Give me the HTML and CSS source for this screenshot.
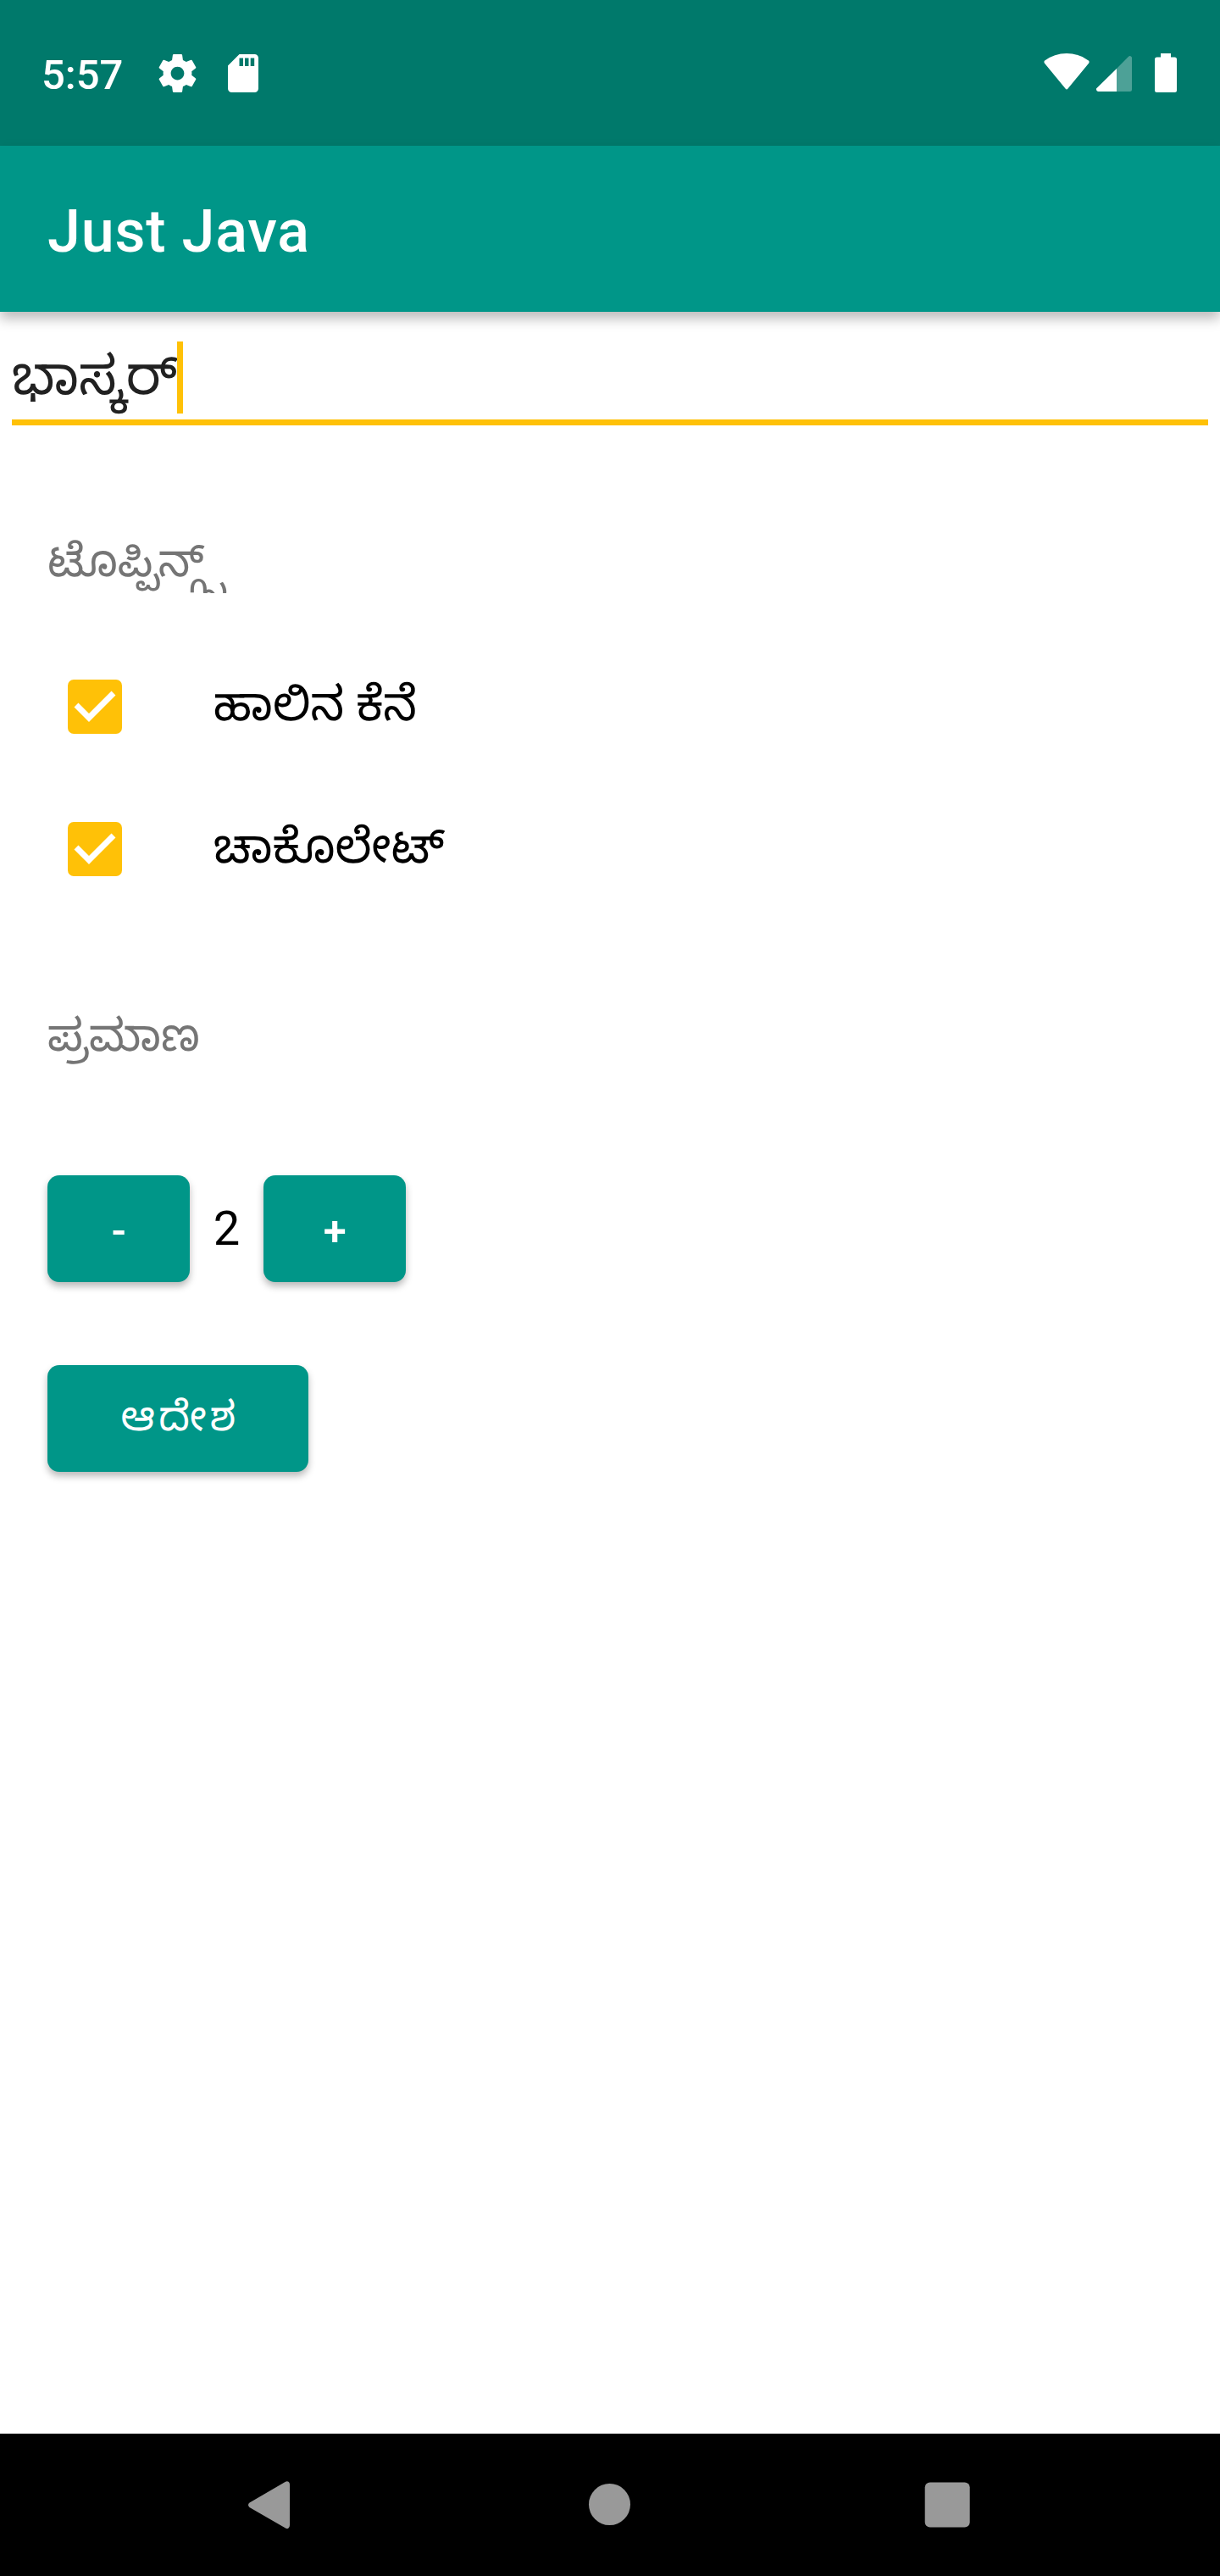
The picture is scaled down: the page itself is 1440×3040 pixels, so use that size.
FILE: index.html
```html
<!DOCTYPE html>
<html lang="kn">
<head>
<meta charset="utf-8">
<title>Just Java</title>
<link rel="stylesheet" href="styles.css">
</head>
<body>
<div class="screen">
  <header class="status-bar">
    <span class="clock">5:57</span>
    <svg class="gear" viewBox="2 2 20 20"><path d="M19.43 12.98c.04-.32.07-.64.07-.98s-.03-.66-.07-.98l2.11-1.65c.19-.15.24-.42.12-.64l-2-3.46c-.12-.22-.39-.3-.61-.22l-2.49 1c-.52-.4-1.08-.73-1.69-.98l-.38-2.65C14.46 2.18 14.25 2 14 2h-4c-.25 0-.46.18-.49.42l-.38 2.65c-.61.25-1.17.59-1.69.98l-2.49-1c-.23-.09-.49 0-.61.22l-2 3.46c-.13.22-.07.49.12.64l2.11 1.65c-.04.32-.07.65-.07.98s.03.66.07.98l-2.11 1.65c-.19.15-.24.42-.12.64l2 3.46c.12.22.39.3.61.22l2.49-1c.52.4 1.08.73 1.69.98l.38 2.65c.03.24.24.42.49.42h4c.25 0 .46-.18.49-.42l.38-2.65c.61-.25 1.17-.59 1.69-.98l2.49 1c.23.09.49 0 .61-.22l2-3.46c.12-.22.07-.49-.12-.64l-2.11-1.65zM12 15.5c-1.93 0-3.5-1.57-3.5-3.5s1.57-3.5 3.5-3.5 3.5 1.57 3.5 3.5-1.57 3.5-3.5 3.5z"/></svg>
    <svg class="sd-card" viewBox="0 0 36 45"><path fill-rule="evenodd" d="M13.5 0H31.5a4.5 4.5 0 0 1 4.5 4.5V40.500a4.500 4.500 0 0 1-4.500 4.500H4.500A4.500 4.500 0 0 1 0 40.500V13.500ZM13.500 4.500V14H18V4.500ZM20 4.500V14H24.500V4.500ZM26.700 4.500V14H31.200V4.500Z"/></svg>
    <span class="spacer"></span>
    <svg class="wifi" viewBox="0 0 54 43"><path d="M.8 8.700Q12.500 0 27 0T53.200 8.700Q54 10 53.200 11.500L28.500 41.500Q27 43.500 25.500 41.500L.8 11.500Q0 10 .8 8.700Z"/></svg>
    <svg class="signal" viewBox="0 0 42 42"><path opacity=".3" d="M24 15 37.800 1Q39.500-.5 41 .5T42 3V39.500Q42 42 39.500 42H24Z"/><path d="M24 15V42H2.500Q.5 42 0 40T1 37.500Z"/></svg>
    <svg class="battery" viewBox="0 0 26 46"><path d="M7 0H19V4.500H23.500Q26 4.500 26 7V43.500Q26 46 23.500 46H2.500Q0 46 0 43.500V7Q0 4.500 2.500 4.500H7Z"/></svg>
  </header>
  <div class="app-bar"><h1 class="app-title">Just Java</h1></div>
  <main class="form">
    <div class="name-field"><span class="name-value">ಭಾಸ್ಕರ್</span><span class="caret"></span></div>
    <h2 class="section-label toppings">ಟೊಪ್ಪಿನ್ಗ್ಸ್</h2>
    <div class="option">
      <svg class="checkbox" viewBox="0 0 64 64"><rect width="64" height="64" rx="7"/><path d="M10 30 25 45 54 16"/></svg>
      <span>ಹಾಲಿನ ಕೆನೆ</span>
    </div>
    <div class="option">
      <svg class="checkbox" viewBox="0 0 64 64"><rect width="64" height="64" rx="7"/><path d="M10 30 25 45 54 16"/></svg>
      <span>ಚಾಕೊಲೇಟ್</span>
    </div>
    <h2 class="section-label quantity-label">ಪ್ರಮಾಣ</h2>
    <div class="stepper">
      <button class="button step">-</button>
      <span class="quantity">2</span>
      <button class="button step">+</button>
    </div>
    <button class="button order">ಆದೇಶ</button>
  </main>
  <nav class="nav-bar">
    <svg class="nav-icon" viewBox="0 0 56 56"><path d="M2.500 25.600 45 .8Q47-.3 48.500 .8T50 4V52Q50 54.500 48.500 55.500T45 55.500L2.500 31Q-.5 28.300 2.500 25.600Z"/></svg>
    <svg class="nav-icon" viewBox="0 0 56 56"><circle cx="28.500" cy="27.500" r="24.500"/></svg>
    <svg class="nav-icon" viewBox="0 0 56 56"><rect x="1.700" y="1.500" width="53" height="53" rx="6"/></svg>
  </nav>
</div>
</body>
</html>
```
FILE: styles.css
```css
* { box-sizing: border-box; }

body {
  margin: 0;
  background: #fff;
  color: #000;
  font-family: Roboto, "Noto Sans Kannada", "Noto Sans", sans-serif;
}

svg { display: block; flex: none; overflow: visible; }

.screen {
  display: flex;
  flex-direction: column;
  width: 1440px;
  height: 3040px;
  overflow: hidden;
}

.status-bar {
  display: flex;
  align-items: flex-start;
  flex: none;
  height: 172px;
  padding: 63px 51px 0 49px;
  background: #00796b;
  fill: #fff;
}

.clock {
  width: 138px;
  margin-top: -3px;
  color: #fff;
  font-size: 49px;
  font-weight: 500;
  line-height: 57px;
}

.gear { width: 45px; height: 45px; margin-top: 1px; }
.sd-card { width: 36px; height: 45px; margin: 1px 0 0 37px; }
.spacer { flex: 1; }
.wifi { width: 54px; height: 43px; }
.signal { width: 42px; height: 42px; margin: 3px 27px 0 8px; }
.battery { width: 26px; height: 46px; }

.app-bar {
  display: flex;
  align-items: center;
  position: relative;
  flex: none;
  height: 196px;
  padding-left: 56px;
  background: #009688;
  box-shadow: 0 8px 14px rgba(0, 0, 0, .27);
}

.app-title {
  margin: 6px 0 0;
  color: #fff;
  font-size: 70px;
  font-weight: 500;
  letter-spacing: .8px;
  line-height: 82px;
}

.form {
  display: flex;
  flex: 1;
  flex-direction: column;
  align-items: flex-start;
}

.name-field {
  display: flex;
  align-self: stretch;
  height: 99px;
  margin: 35px 14px 0;
  border-bottom: 7px solid #ffc107;
  color: #212121;
  font-size: 63px;
  line-height: 81px;
}

.name-value { width: 195px; white-space: nowrap; }
.caret { width: 7px; height: 85px; background: #ffc107; }

.section-label {
  height: 75px;
  margin: 0 0 0 56px;
  color: #757575;
  font-size: 53px;
  font-weight: 400;
  line-height: 75px;
  white-space: nowrap;
}

.toppings {
  width: 216px;
  margin-top: 123px;
  margin-bottom: 50px;
  overflow: hidden;
}

.option {
  display: flex;
  align-items: center;
  gap: 108px;
  height: 168px;
  padding-left: 80px;
  font-size: 56px;
  line-height: 75px;
}

.option span { padding-bottom: 6px; }

.checkbox { width: 64px; height: 64px; fill: #ffc107; }
.checkbox path { fill: none; stroke: #fff; stroke-width: 7; }

.quantity-label { margin-top: 99px; }

.stepper {
  display: flex;
  align-items: center;
  margin: 127px 0 98px 56px;
}

.button {
  height: 126px;
  padding: 4px 0 0 5px;
  border: 0;
  border-radius: 14px;
  background: #009688;
  box-shadow: 0 5px 8px rgba(0, 0, 0, .28);
  color: #fff;
  font-family: inherit;
  font-size: 49px;
  font-weight: 600;
  letter-spacing: 4.4px;
}

.step { width: 168px; }
.quantity { width: 87px; font-size: 56px; text-align: center; }

.order {
  width: 308px;
  margin-left: 56px;
  padding-top: 9px;
  font-size: 48px;
  font-weight: 400;
}

.nav-bar {
  display: flex;
  justify-content: space-between;
  flex: none;
  height: 168px;
  padding: 56px 294px 0 292px;
  background: #000;
  fill: #999;
}

.nav-icon { width: 56px; height: 56px; }
```
